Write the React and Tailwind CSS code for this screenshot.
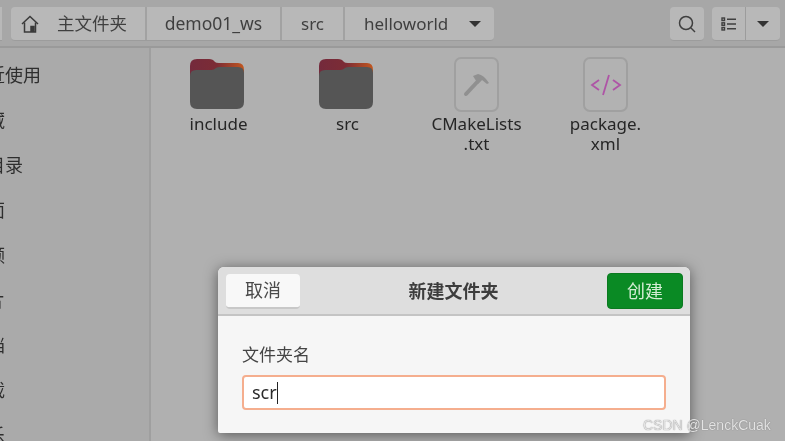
const cjk = { fontFamily: '"Noto Sans", "Noto Sans CJK SC", sans-serif' };

const sidebarItems = ['最近使用', '收藏', '主目录', '桌面', '视频', '图片', '文档', '下载', '音乐'];

function Folder() {
  return (
    <svg width="56" height="52" viewBox="0 0 56 52" className="block mr-[3px] mb-[2px]">
      <defs>
        <linearGradient id="t" x1="0" x2="1" y1="0" y2="0">
          <stop offset="0" stopColor="#742a3c" />
          <stop offset="0.5" stopColor="#7c2c35" />
          <stop offset="1" stopColor="#c2571f" />
        </linearGradient>
      </defs>
      <path d="M1 8 Q1 1 8 1 H20 Q24 1 26 4 Q27 5 30 5 H49 Q55 5 55 12 V22 H1 Z" fill="url(#t)" />
      <path d="M1 18 Q1 12 7 12 H22 Q25 12 27 10 Q28 9 31 9 H49 Q55 9 55 15 V44 Q55 51 48 51 H8 Q1 51 1 44 Z" fill="#555555" />
    </svg>
  );
}

function Tile({ children }) {
  return (
    <div className="w-[45px] h-[55px] rounded-[7px] border-2 border-[#a0a0a0] bg-[#b2b2b2] flex items-center justify-center">
      {children}
    </div>
  );
}

function Hammer() {
  return (
    <svg width="32" height="32" viewBox="0 0 32 32">
      <path d="M5 25 L19 10" stroke="#909090" strokeWidth="4" strokeLinecap="round" />
      <path d="M12 7 L17 5 Q23 6 28 14 L26 15 L21 11 L17 15 Z" fill="#909090" />
    </svg>
  );
}

function Xml() {
  return (
    <svg width="32" height="24" viewBox="0 0 32 24" fill="none" stroke="#ae54a6" strokeWidth="1.8">
      <path d="M9 7 L2 12 L9 17" />
      <path d="M19 2 L13 22" />
      <path d="M23 7 L30 12 L23 17" />
    </svg>
  );
}

function Item({ icon, lines }) {
  return (
    <div className="w-[129px] flex flex-col items-center shrink-0">
      <div className="h-[55px] flex items-end justify-center">{icon}</div>
      <div className="mt-[2px] text-[17px] leading-[20px] text-[#262626] text-center">
        {lines.map((l, i) => (
          <span key={l}>
            {i > 0 && <br />}
            {l}
          </span>
        ))}
      </div>
    </div>
  );
}

export default function App() {
  return (
    <div className="relative w-[785px] h-[441px] overflow-hidden bg-[#b0b0b0] blur-[0.5px]" style={cjk}>
      {/* Header */}
      <header className="h-[48px] bg-[#a7a7a7] border-b-2 border-[#9a9a9a] flex items-start pt-[7px]">
        <div className="w-[2px] h-[34px] bg-[#b8b8b8] border-b border-[#9c9c9c] shrink-0"></div>
        <nav className="ml-[9px] h-[34px] w-[483px] flex rounded-[4px] bg-[#b8b8b8] border-b border-[#9c9c9c] text-[17px] text-[#3f3f3f]">
          <div className="w-[136px] flex items-center border-r-2 border-[#a2a2a2] pl-[10px]">
            <svg width="18" height="18" viewBox="0 0 18 18" fill="none" stroke="#3a3a3a" strokeWidth="1.5">
              <path d="M1 9 L9 1.5 L17 9" />
              <path d="M3.5 7.5 V17 H14.5 V7.5" />
              <path d="M10 17 V11.5 H13 V17" fill="#3a3a3a" />
            </svg>
            <span className="ml-[18px] text-[17.5px]">主文件夹</span>
          </div>
          <div className="w-[135px] flex items-center justify-center border-r-2 border-[#a2a2a2] text-[17.5px]">demo01_ws</div>
          <div className="w-[63px] flex items-center justify-center border-r-2 border-[#a2a2a2]">src</div>
          <div className="flex-1 flex items-center pl-[19px]">
            helloworld
            <svg width="12" height="6" viewBox="0 0 12 6" className="ml-[21px]">
              <path d="M0 0 H12 L6 6 Z" fill="#333333" />
            </svg>
          </div>
        </nav>
        <button className="ml-[176px] w-[34px] h-[34px] rounded-[4px] bg-[#b8b8b8] border-b border-[#9c9c9c] flex items-center justify-center">
          <svg width="18" height="18" viewBox="0 0 18 18" fill="none" stroke="#3f3f3f" strokeWidth="1.5">
            <circle cx="8" cy="8" r="6.5" />
            <path d="M13 13 L17 17" />
          </svg>
        </button>
        <div className="ml-[8px] w-[68px] h-[34px] rounded-[4px] bg-[#b8b8b8] border-b border-[#9c9c9c] flex">
          <div className="w-[34px] flex items-center justify-center border-r border-[#9c9c9c]">
            <svg width="16" height="14" viewBox="0 0 16 14" fill="none" stroke="#3f3f3f" strokeWidth="1.4">
              <rect x="1" y="1" width="2.5" height="2.5" />
              <rect x="1" y="5.8" width="2.5" height="2.5" />
              <rect x="1" y="10.5" width="2.5" height="2.5" />
              <path d="M6 2.2 H15 M6 7 H15 M6 11.8 H15" />
            </svg>
          </div>
          <div className="flex-1 flex items-center justify-center">
            <svg width="12" height="6" viewBox="0 0 12 6">
              <path d="M0 0 H12 L6 6 Z" fill="#333333" />
            </svg>
          </div>
        </div>
      </header>

      <div className="flex h-[393px]">
        {/* Sidebar */}
        <aside className="w-[151px] shrink-0 bg-[#aaaaaa] border-r-2 border-[#9f9f9f] overflow-hidden pt-[5px]">
          {sidebarItems.map((s) => (
            <div key={s} className="h-[45px] flex items-center ml-[-31px] text-[18px] text-[#2e2e2e] whitespace-nowrap">
              {s}
            </div>
          ))}
        </aside>
        {/* Files */}
        <main className="flex-1 flex items-start pl-[3px] pt-[9px]">
          <Item icon={<Folder />} lines={['include']} />
          <Item icon={<Folder />} lines={['src']} />
          <Item icon={<Tile><Hammer /></Tile>} lines={['CMakeLists', '.txt']} />
          <Item icon={<Tile><Xml /></Tile>} lines={['package.', 'xml']} />
        </main>
      </div>

      {/* Dialog */}
      <div className="absolute left-[218px] top-[267px] w-[472px] h-[166px] rounded-t-[6px] rounded-b-[2px] bg-[#f6f6f6] shadow-[0_2px_14px_rgba(0,0,0,0.5)] overflow-hidden">
        <div className="h-[49px] bg-[#dedede] border-b-2 border-[#c4c4c4] flex items-start justify-between pl-[8px] pr-[7px] pt-[6px]">
          <button className="w-[74px] h-[35px] mt-[1px] rounded-[4px] bg-[#f8f8f8] border-b-2 border-[#c8c8c8] text-[18px] text-[#4a4a4a] flex items-center justify-center">
            取消
          </button>
          <div className="h-[36px] flex items-center text-[18px] font-bold text-[#3d3d3d]">新建文件夹</div>
          <button className="w-[76px] h-[36px] rounded-[4px] bg-[#0a8a24] border border-[#0b7a20] text-[18px] text-[#d3ecd3] flex items-center justify-center">
            创建
          </button>
        </div>
        <div className="pl-[24px] pt-[26px]">
          <div className="text-[17px] leading-[26px] text-[#444444]">文件夹名</div>
          <div className="mt-[7px] w-[424px] h-[35px] rounded-[4px] border-2 border-[#f5ae8e] bg-white flex items-center pl-[8px] text-[18px] text-[#2a2a2a]">
            scr
            <span className="w-px h-[22px] bg-[#222222]"></span>
          </div>
        </div>
      </div>

      {/* Watermark */}
      <div
        className="absolute left-[643px] top-[417px] text-[14px] leading-[16px] text-[#e4e4e4] [text-shadow:0_0_1px_#666666] whitespace-nowrap"
        style={{ fontFamily: '"Liberation Sans", sans-serif' }}
      >
        CSDN @LenckCuak
      </div>
    </div>
  );
}
